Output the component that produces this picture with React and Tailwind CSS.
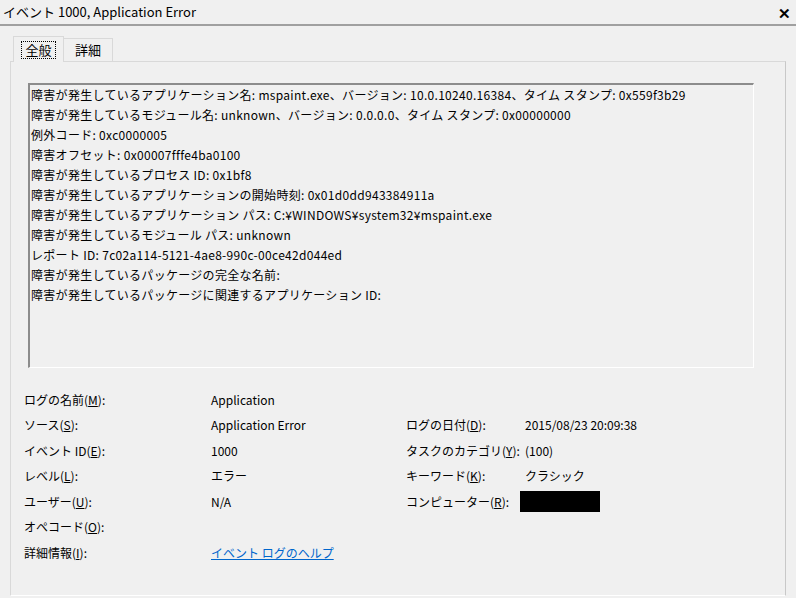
import React from 'react';

const lines = [
  '障害が発生しているアプリケーション名: mspaint.exe、バージョン: 10.0.10240.16384、タイム スタンプ: 0x559f3b29',
  '障害が発生しているモジュール名: unknown、バージョン: 0.0.0.0、タイム スタンプ: 0x00000000',
  '例外コード: 0xc0000005',
  '障害オフセット: 0x00007fffe4ba0100',
  '障害が発生しているプロセス ID: 0x1bf8',
  '障害が発生しているアプリケーションの開始時刻: 0x01d0dd943384911a',
  '障害が発生しているアプリケーション パス: C:¥WINDOWS¥system32¥mspaint.exe',
  '障害が発生しているモジュール パス: unknown',
  'レポート ID: 7c02a114-5121-4ae8-990c-00ce42d044ed',
  '障害が発生しているパッケージの完全な名前:',
  '障害が発生しているパッケージに関連するアプリケーション ID:',
];

function Label({ text, k }) {
  // access key underlined, like "(M)"
  return (
    <span>
      {text}(<span className="underline">{k}</span>):
    </span>
  );
}

export default function App() {
  return (
    <div className="w-[796px] h-[598px] bg-[#f0f0f0] text-black text-[12px] font-['Noto_Sans_CJK_JP','Noto_Sans',sans-serif] flex flex-col overflow-hidden">
      {/* Title */}
      <div className="h-[24px] flex items-center justify-between pl-[3px] pr-[5px] text-[13px]">
        <span>イベント 1000, Application Error</span>
        <span className="font-bold text-[15px] leading-none">✕</span>
      </div>
      <div className="h-[2px] bg-[#a0a0a0]" />

      <div className="flex-1 flex flex-col px-[10px] pt-[9px] pb-[2px]">
        {/* Tabs */}
        <div className="flex items-end h-[26px] pl-[3px]">
          <div className="h-[26px] w-[51px] bg-[#f0f0f0] border border-b-0 border-[#d9d9d9] flex items-center justify-center relative z-10 mb-[-1px]">
            <span className="border border-dotted border-black px-[3px] leading-[16px] text-[13px]">全般</span>
          </div>
          <div className="h-[23px] w-[49px] border border-l-0 border-b-0 border-[#d9d9d9] flex items-center justify-center text-[13px]">
            詳細
          </div>
        </div>

        {/* Panel */}
        <div className="flex-1 border border-[#d9d9d9] border-b-white border-r-[#c8c8c8] pl-[17px] pr-[31px] pt-[21px] flex flex-col">
          <div className="h-[285px] border-t-2 border-l-2 border-t-[#8c8c8c] border-l-[#8c8c8c] border-b border-r border-b-white border-r-white pl-[1px] leading-[20px] tracking-[0.3px] whitespace-nowrap overflow-hidden">
            {lines.map((l, i) => (
              <div key={i}>{l}</div>
            ))}
          </div>

          <div className="mt-[19px] -ml-[4px] grid grid-cols-[187px_195px_119px_1fr] auto-rows-[25.5px] items-center">
            <Label text="ログの名前" k="M" />
            <span>Application</span>
            <span />
            <span />

            <Label text="ソース" k="S" />
            <span>Application Error</span>
            <Label text="ログの日付" k="D" />
            <span>2015/08/23 20:09:38</span>

            <Label text="イベント ID" k="E" />
            <span>1000</span>
            <Label text="タスクのカテゴリ" k="Y" />
            <span>(100)</span>

            <Label text="レベル" k="L" />
            <span>エラー</span>
            <Label text="キーワード" k="K" />
            <span>クラシック</span>

            <Label text="ユーザー" k="U" />
            <span>N/A</span>
            <Label text="コンピューター" k="R" />
            <div className="-ml-[5px] w-[80px] h-[21px] bg-black" />

            <Label text="オペコード" k="O" />
            <span />
            <span />
            <span />

            <Label text="詳細情報" k="I" />
            <span className="text-[#0066cc] underline">イベント ログのヘルプ</span>
            <span />
            <span />
          </div>
        </div>
      </div>
    </div>
  );
}
